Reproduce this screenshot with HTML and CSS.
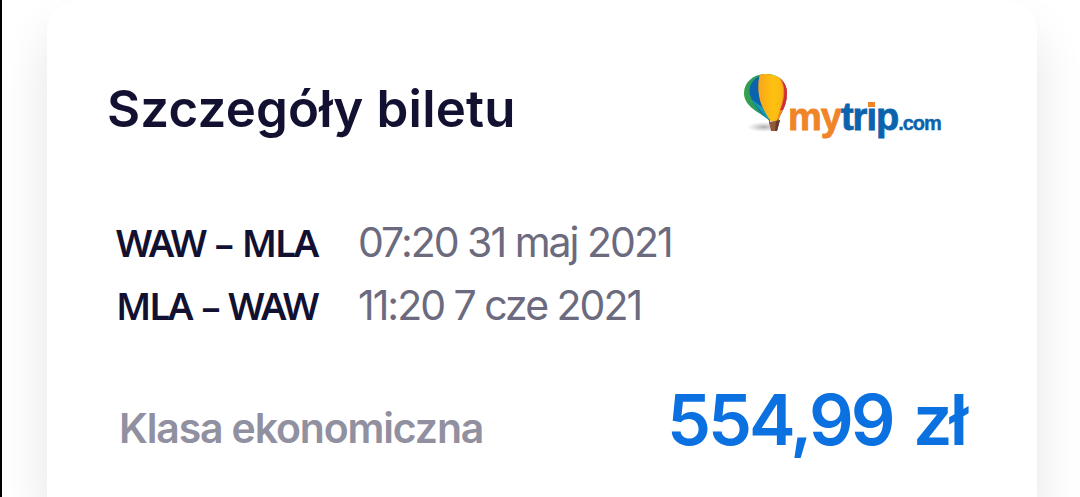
FILE: index.html
```html
<!DOCTYPE html>
<html lang="pl">
<head>
    <meta charset="UTF-8">
    <meta name="viewport" content="width=device-width, initial-scale=1.0">
    <title>Szczegóły biletu</title>
    <link rel="stylesheet" href="styles.css">
</head>
<body>
    <div class="ticket">
        <div class="header">
            <h1>Szczegóły biletu</h1>
            <div class="logo">
                <svg class="balloon" width="44" height="60" viewBox="0 0 44 60">
                    <defs>
                        <radialGradient id="shade">
                            <stop offset="0" stop-color="#777" stop-opacity=".6"/>
                            <stop offset="1" stop-color="#999" stop-opacity="0"/>
                        </radialGradient>
                        <linearGradient id="gold">
                            <stop offset="0" stop-color="#f9a51a"/>
                            <stop offset=".6" stop-color="#fdc20f"/>
                            <stop offset="1" stop-color="#f9b414"/>
                        </linearGradient>
                        <linearGradient id="green">
                            <stop offset="0" stop-color="#35a04a"/>
                            <stop offset="1" stop-color="#1689a0"/>
                        </linearGradient>
                        <clipPath id="envelope">
                            <path d="M22 0C35 0 43 8 43 19C43 31 38 37 34 47L26 47C18 39 0 34 0 19C0 8 10 0 22 0Z"/>
                        </clipPath>
                    </defs>
                    <ellipse cx="20" cy="53" rx="17" ry="5" fill="url(#shade)"/>
                    <g clip-path="url(#envelope)">
                        <rect width="44" height="48" fill="url(#green)"/>
                        <path d="M20 0C8 5 4 12 6 21C9 31 18 39 24 47L30 47L26 0Z" fill="#0b62ad"/>
                        <path d="M7 25C13 34 19 38 24 47L28 47L18 33Z" fill="#169bb0"/>
                        <path d="M16 0C13 10 14 23 18 32C21 39 24 42 26 47L33 47C40 34 44 14 34 0Z" fill="url(#gold)"/>
                        <path d="M33 1C42 9 40 27 34 42L33 47L44 47L44 0Z" fill="#f58220"/>
                        <path d="M34 2C43 10 41 25 36 36L44 36L44 2Z" fill="#cf2e3c"/>
                    </g>
                    <path d="M25 45L26 50M34 45L34 50" stroke="#8b5a3c" stroke-width="1"/>
                    <path d="M25 48L36 46L33 57L27 57Z" fill="#91583b"/>
                    <path d="M32 47L36 46L33 57L31 57Z" fill="#643a2b"/>
                </svg>
                <div class="logo-text"><span class="my">my</span><span class="trip">tr<span class="letter-i">ı<span class="dot"></span></span>p</span><span class="com">.com</span></div>
            </div>
        </div>

        <div class="flights">
            <div class="flight">
                <span class="route">WAW – MLA</span>
                <span class="date">07:20 31 maj 2021</span>
            </div>
            <div class="flight">
                <span class="route">MLA – WAW</span>
                <span class="date">11:20 7 cze 2021</span>
            </div>
        </div>

        <div class="footer">
            <span class="class-name">Klasa ekonomiczna</span>
            <span class="price">554,99 zł</span>
        </div>
    </div>
</body>
</html>
```
FILE: styles.css
```css
* {
    box-sizing: border-box;
}
html {
    overflow: hidden;
}
body {
    margin: 0;
    height: 497px;
    padding: 1px 43px 0 45px;
    border-left: 2px solid #000;
    background-color: #fff;
    font-family: Inter, sans-serif;
    color: #121131;
    overflow: hidden;
}
.ticket {
    height: 496px;
    padding: 71px 71px 0 60px;
    background: #fff;
    border-radius: 29px 29px 0 0;
    box-shadow: 0 30px 50px rgba(0, 0, 0, 0.11);
}
.header {
    display: flex;
    justify-content: space-between;
    height: 139px;
}
h1 {
    margin: 7px 0 0;
    font-size: 51px;
    line-height: 60px;
    font-weight: 600;
    letter-spacing: 0.2px;
    white-space: nowrap;
}
.logo {
    display: flex;
    width: 222px;
}
.balloon {
    flex: none;
    margin-top: 2px;
}
.logo-text {
    margin-top: 23px;
    font-family: "Liberation Sans", sans-serif;
    font-weight: bold;
    font-size: 38px;
    line-height: 44px;
    letter-spacing: -1px;
    white-space: nowrap;
}
.my {
    color: #ef8528;
    -webkit-text-stroke: 0.8px #ef8528;
}
.trip {
    color: #0b63ae;
    -webkit-text-stroke: 0.8px #0b63ae;
}
.letter-i {
    position: relative;
}
.dot {
    position: absolute;
    left: 2px;
    top: 6px;
    width: 7px;
    height: 5px;
    background: #ef8528;
}
.com {
    font-size: 20px;
    color: #0b63ae;
    -webkit-text-stroke: 0.4px #0b63ae;
}
.flights {
    height: 168px;
}
.flight {
    display: flex;
    align-items: baseline;
    height: 63px;
    line-height: 63px;
    white-space: nowrap;
}
.route {
    width: 242px;
    margin-left: 9px;
    font-family: "Noto Sans", sans-serif;
    font-size: 38px;
    font-weight: 600;
    letter-spacing: -2px;
    word-spacing: 2px;
}
.date {
    font-size: 41px;
    letter-spacing: -2px;
    color: #6b6a7e;
}
.footer {
    display: flex;
    align-items: flex-start;
    justify-content: space-between;
    white-space: nowrap;
}
.class-name {
    margin: 9px 0 0 12px;
    font-size: 41px;
    line-height: 80px;
    font-weight: 600;
    letter-spacing: -1.15px;
    color: #9090a0;
}
.price {
    margin: 1px 1px 0 0;
    font-size: 70px;
    line-height: 80px;
    font-weight: 600;
    letter-spacing: -3px;
    word-spacing: 6px;
    color: #0b70e0;
}
```
